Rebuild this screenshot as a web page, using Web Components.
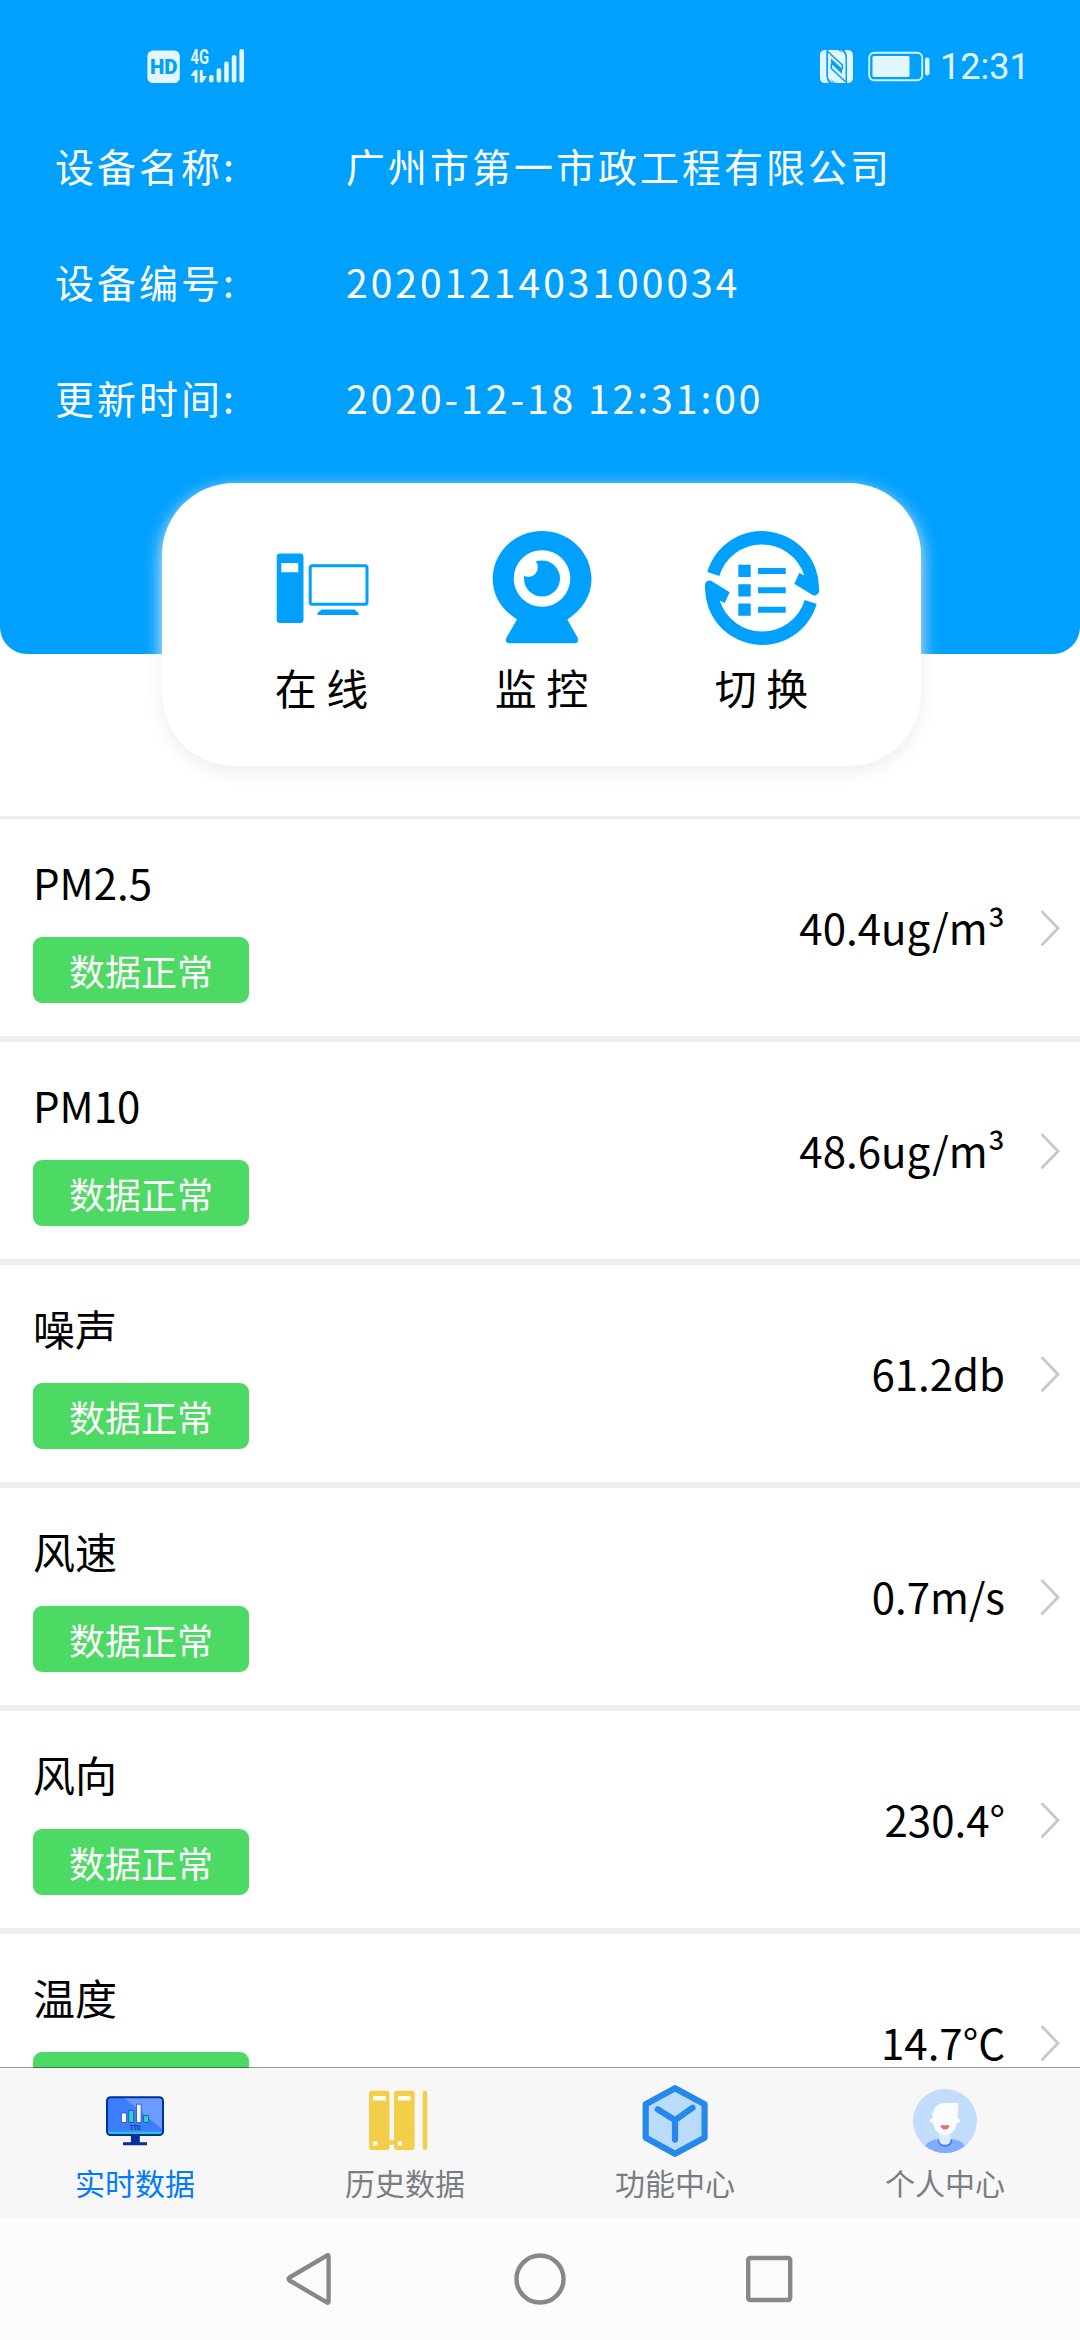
<!DOCTYPE html>
<html lang="zh-CN">
<head>
<meta charset="utf-8">
<title>实时数据</title>
<style>
  html, body { margin: 0; padding: 0; }
  body {
    width: 1080px; height: 2340px; overflow: hidden; background: #fff; color: #000;
    font-family: "Noto Sans CJK SC", "Noto Sans", sans-serif;
  }
</style>
</head>
<body>
<app-page></app-page>

<template id="t-page">
  <style>
    :host { display: flex; flex-direction: column; height: 2340px; }
    main { flex: 1; min-height: 0; overflow: hidden; display: flex; flex-direction: column; }
    header { flex: none; height: 654px; background: #00a0ff; border-radius: 0 0 27px 27px; }
    .rows { flex: none; margin-top: 50px; border-top: 3px solid #eee; }
  </style>
  <main>
    <header>
      <status-bar></status-bar>
      <info-row label="设备名称:">广州市第一市政工程有限公司</info-row>
      <info-row label="设备编号:">2020121403100034</info-row>
      <info-row label="更新时间:">2020-12-18 12:31:00</info-row>
    </header>
    <action-card>
      <action-item label="在 线">
        <svg width="114" height="114" viewBox="0 0 114 114" fill="#00a0ff">
          <path fill-rule="evenodd" d="M15 22.500H35.500Q38.500 22.500 38.500 26V88.500Q38.500 92 35.500 92H15Q11.700 92 11.700 88.500V26Q11.700 22.500 15 22.500ZM16.300 32V41.200H33.200V32Z"/>
          <rect x="45.200" y="34.700" width="56.800" height="38.600" rx="2" fill="none" stroke="#00a0ff" stroke-width="3"/>
          <path d="M56.500 78.500H89.500L93.500 82V84H52.500V82Z"/>
        </svg>
      </action-item>
      <action-item label="监 控">
        <svg width="114" height="114" viewBox="0 0 114 114" fill="#00a0ff">
          <path d="M57 0C84 0 106.500 21 106.500 48C106.500 65 97 79 82.300 88.500L92.500 106.500Q94.500 112.300 89.500 112.300H24.500Q19.500 112.300 21.500 106.500L32 88.500C17 79 7.700 65 7.700 48C7.700 21 30 0 57 0Z"/>
          <circle cx="57" cy="47.500" r="28.300" fill="#fff"/>
          <circle cx="57" cy="47.500" r="18"/>
          <circle cx="43.200" cy="36.400" r="9.600" fill="#fff"/>
        </svg>
      </action-item>
      <action-item label="切 换">
        <svg width="114" height="114" viewBox="0 0 114 114" fill="#00a0ff">
          <path d="M2.300 41A57 57 0 0 1 114 57.500V61Q112.500 65 108 64.300L89.300 52.700L94.300 42L99.300 44.500A44.500 44.500 0 0 0 14.300 45Z"/>
          <path transform="rotate(180 57 57)" d="M2.300 41A57 57 0 0 1 114 57.500V61Q112.500 65 108 64.300L89.300 52.700L94.300 42L99.300 44.500A44.500 44.500 0 0 0 14.300 45Z"/>
          <path d="M33.300 33.700h12.400v12.300h-12.400zM33.300 53.200h12.400v12.300h-12.400zM33.300 72.500h12.400v12.300h-12.400zM53 37h27.700v6h-27.700zM53 56.300h27.700v6h-27.700zM53 75.700h27.700v6h-27.700z"/>
        </svg>
      </action-item>
    </action-card>
    <section class="rows">
      <reading-row name="PM2.5" value="40.4ug/m³">数据正常</reading-row>
      <reading-row name="PM10" value="48.6ug/m³">数据正常</reading-row>
      <reading-row name="噪声" value="61.2db">数据正常</reading-row>
      <reading-row name="风速" value="0.7m/s">数据正常</reading-row>
      <reading-row name="风向" value="230.4°">数据正常</reading-row>
      <reading-row name="温度" value="14.7°C"></reading-row>
    </section>
  </main>
  <tab-bar>
    <tab-item label="实时数据" active>
      <svg width="72" height="72" viewBox="0 0 72 72">
        <rect x="8" y="12.300" width="56" height="37.700" rx="3.500" fill="#3d7eff"/>
        <path d="M25.600 13H61Q63.500 13 63.500 16V44.500Z" fill="#6c9bff"/>
        <rect x="9" y="46.600" width="54" height="2.400" fill="#2fc6d0"/>
        <rect x="8" y="12.300" width="56" height="37.700" rx="3.500" fill="none" stroke="#00309a" stroke-width="2"/>
        <path d="M31.900 51H40.800V57.300H48V60.300H24V57.300H31.900Z" fill="#00309a"/>
        <g stroke="#1c4fb5" stroke-width=".8">
          <path d="M22.400 28h5v9.500h-5zM37.500 19.200h4.600v18.300h-4.600z" fill="#fff"/>
          <path d="M29.700 25.400h5v12.100h-5zM44.600 30.500h5v7h-5z" fill="#2fd0c8"/>
        </g>
        <text x="36.200" y="44.800" text-anchor="middle" font-family="Roboto, sans-serif" font-weight="700" font-size="6.500" textLength="10.800" lengthAdjust="spacingAndGlyphs" fill="#00309a">TTU</text>
      </svg>
    </tab-item>
    <tab-item label="历史数据">
      <svg width="72" height="72" viewBox="0 0 72 72" fill="#f2ce4b">
        <rect x="0" y="5.800" width="20.500" height="59.200" rx="3"/>
        <rect x="25" y="5.800" width="20.600" height="59.200" rx="3"/>
        <rect x="53.700" y="5.800" width="4.500" height="59.200" rx="2.200"/>
        <rect x="19" y="55.300" width="8" height="4.400"/>
        <path d="M4 11h12.700v4.500h-12.700zM28.800 11h12.700v4.500h-12.700zM4 56.200h4.300v4.500h-4.300zM28.800 56.200h4.300v4.500h-4.300z" fill="#fffaf0"/>
      </svg>
    </tab-item>
    <tab-item label="功能中心">
      <svg width="72" height="72" viewBox="0 0 72 72" stroke="#2589ea" stroke-width="6.200" stroke-linecap="round" stroke-linejoin="round">
        <path d="M36 3.200L65.600 19.200V52.800L36 68.800L6.700 52.800V19.200Z" fill="#badbfa"/>
        <path d="M18.800 24.300L36 35.200L53.500 22.800M36 35.200V54.600" fill="none"/>
      </svg>
    </tab-item>
    <tab-item label="个人中心">
      <svg width="72" height="72" viewBox="0 0 72 72">
        <circle cx="36" cy="36" r="32" fill="#c2ddfb"/>
        <path d="M15.800 60.800Q21.500 54.300 29 54.300H43Q51 54.300 56.200 60.800A32 32 0 0 1 15.800 60.800Z" fill="#82adff"/>
        <path d="M29.300 54.500Q30 61 36 61Q42 61 42.700 54.500" fill="none" stroke="#3f7df5" stroke-width="1.500"/>
        <path d="M30.400 46H41.400V55Q41.400 59.600 36 59.600Q30.400 59.600 30.400 55Z" fill="#dfebfe"/>
        <path d="M36 18H49.300L48.500 33.200Q51 33.500 51 35.600Q51 37.800 47.800 38C47 45.500 42 50 36 50C30 50 25 45.500 24.200 38Q20.800 37.800 20.800 35.600Q20.800 33.600 23.300 33.200C23 23.500 28 18 36 18Z" fill="#f9fbff"/>
        <path d="M31.500 40.300H40.500Q39.800 44.500 36 44.500Q32.200 44.500 31.500 40.300Z" fill="#dc7370"/>
      </svg>
    </tab-item>
  </tab-bar>
  <nav-keys></nav-keys>
</template>

<template id="t-status">
  <style>
    :host { display: flex; height: 107px; box-sizing: border-box; padding: 44px 0 0 147px; align-items: flex-start; color: #e3f6ff; }
    svg { display: block; flex: none; }
    .sig { margin-left: 9px; }
    .nfc { margin-left: 574px; }
    .bat { margin-left: 15px; }
    time { margin-left: 10px; font: 400 36px/48px Roboto, sans-serif; height: 46px; margin-top: -1px; }
  </style>
  <svg width="34" height="46" viewBox="0 0 34 46">
    <rect x=".4" y="6.600" width="32.400" height="32.400" rx="5.500" fill="#e3f6ff"/>
    <text x="16.700" y="29.500" text-anchor="middle" font-family="Roboto, sans-serif" font-weight="900" font-size="21" textLength="27.500" lengthAdjust="spacingAndGlyphs" fill="#00a0ff">HD</text>
  </svg>
  <svg class="sig" width="56" height="46" viewBox="0 0 56 46" fill="#e3f6ff">
    <text x=".5" y="20" font-family="Roboto, sans-serif" font-weight="700" font-size="20" textLength="18.500" lengthAdjust="spacingAndGlyphs">4G</text>
    <path d="M4.600 26H7.500V38.500H4.600V32H.4ZM9.800 26H12.700V32H17L12.700 38.500H9.800Z"/>
    <rect x="19" y="31" width="4.600" height="7.500" rx="2.200"/>
    <rect x="26.600" y="24.300" width="4.600" height="14.200" rx="2.200"/>
    <rect x="34.200" y="17.600" width="4.600" height="20.900" rx="2.200"/>
    <rect x="41.800" y="11" width="4.600" height="27.500" rx="2.200"/>
    <rect x="49.400" y="5" width="4.600" height="33.500" rx="2.200"/>
  </svg>
  <svg class="nfc" width="33" height="46" viewBox="0 0 33 46" fill="#e3f6ff">
    <path d="M5.500 6H6.300V31Q6.300 36 9 39H5.500Q0 39 0 33.500V11.500Q0 6 5.500 6Z"/>
    <path d="M8.500 6H17.500Q23.500 7.500 23.500 15V26L11 14.500V34Q11 37.500 13.500 39Q8 37.500 8 31V6Z"/>
    <path d="M25 39H16Q10.500 37.500 10.500 31V19L22 30V11Q22 7.500 20 6Q25.500 8 25.500 14V39Z"/>
    <path d="M27.500 39H27V14Q27 9 24.500 6H27.500Q33 6 33 11.500V33.500Q33 39 27.500 39Z"/>
    <path d="M7.300 7L22.300 21V25.500M25.800 38L11.300 24.500V20" fill="none" stroke="#00a0ff" stroke-width="1.600"/>
  </svg>
  <svg class="bat" width="62" height="46" viewBox="0 0 62 46">
    <rect x="1.200" y="8.800" width="53" height="27.500" rx="5" fill="none" stroke="#d2f1ff" stroke-width="1.900"/>
    <rect x="4.500" y="12" width="37" height="21" rx="1.500" fill="#e3f6ff"/>
    <rect x="57" y="13.500" width="4.500" height="18" rx="2.200" fill="#e3f6ff"/>
  </svg>
  <time>12:31</time>
</template>

<template id="t-info">
  <style>
    :host { display: flex; height: 116px; line-height: 116px; padding-left: 55px; font-size: 39px; letter-spacing: 3px; color: #fff; white-space: nowrap; }
    .label { flex: none; width: 291px; }
  </style>
  <span class="label"></span><slot></slot>
</template>

<template id="t-card">
  <style>
    :host {
      flex: none; display: flex; justify-content: center; box-sizing: border-box;
      width: 759px; height: 283px; margin: -171px 0 0 162px; padding-top: 48px;
      background: #fff; border-radius: 72px; box-shadow: 0 6px 18px #eee;
    }
  </style>
  <slot></slot>
</template>

<template id="t-action">
  <style>
    :host { display: flex; flex-direction: column; align-items: center; gap: 12px; width: 220px; }
    ::slotted(svg) { display: block; }
    .label { font-size: 42px; line-height: 60px; white-space: pre; }
  </style>
  <slot></slot><span class="label"></span>
</template>

<template id="t-reading">
  <style>
    :host { display: flex; align-items: center; box-sizing: border-box; height: 223px; padding: 0 20px 0 33px; border-bottom: 6px solid #eee; background: #fff; }
    .left { flex: 1; display: flex; flex-direction: column; align-items: flex-start; gap: 25px; }
    .name, .value { font-size: 42px; line-height: 60px; }
    .value { margin-bottom: 2px; }
    .tag { width: 216px; height: 66px; line-height: 66px; border-radius: 9px; background: #4cd964; color: #fff; font-size: 36px; text-align: center; }
    svg { display: block; margin-left: 35px; }
  </style>
  <div class="left"><span class="name"></span><span class="tag"><slot></slot></span></div>
  <span class="value"></span>
  <svg width="20" height="36" viewBox="0 0 20 36"><path d="M2.300 1.900L18 18.200L2.300 34.500" fill="none" stroke="#c8c8c8" stroke-width="2.800" stroke-linecap="round"/></svg>
</template>

<template id="t-tabs">
  <style>
    :host { flex: none; position: relative; display: flex; height: 150px; margin-top: -1px; border-top: 1px solid rgba(0,0,0,.4); background: #f7f7f7; background-clip: padding-box; }
  </style>
  <slot></slot>
</template>

<template id="t-tab">
  <style>
    :host { flex: 1; display: flex; flex-direction: column; align-items: center; padding-top: 17px; color: #7a7e83; }
    :host([active]) { color: #007aff; }
    ::slotted(svg) { display: block; }
    .label { margin-top: 4px; font-size: 30px; line-height: 42px; }
  </style>
  <slot></slot><span class="label"></span>
</template>

<template id="t-nav">
  <style>
    :host { flex: none; display: flex; justify-content: center; gap: 178px; height: 122px; box-sizing: border-box; padding-top: 35px; background: #fcfcfc; }
    svg { display: block; fill: none; stroke: #888; stroke-width: 4.400; stroke-linejoin: round; }
  </style>
  <svg width="52" height="52" viewBox="0 0 52 52"><path d="M43.200 2.300Q44.600 1.500 44.600 4V48Q44.600 50.500 42.800 49.300L5.500 27.500Q4 26 5.500 24.500Z"/></svg>
  <svg width="52" height="52" viewBox="0 0 52 52"><circle cx="26" cy="26" r="23.500"/></svg>
  <svg width="52" height="52" viewBox="0 0 52 52"><rect x="4.200" y="5" width="42" height="42" rx="2"/></svg>
</template>

<script>
  // Registers a custom element whose shadow root is cloned from a template;
  // each listed attribute is written into the shadow node with the same class.
  function define(tag, templateId, attributes = []) {
    customElements.define(tag, class extends HTMLElement {
      constructor() {
        super();
        this.attachShadow({ mode: 'open' })
            .append(document.getElementById(templateId).content.cloneNode(true));
      }
      connectedCallback() {
        for (const name of attributes) {
          this.shadowRoot.querySelector('.' + name).textContent = this.getAttribute(name) || '';
        }
      }
    });
  }
  define('status-bar', 't-status');
  define('info-row', 't-info', ['label']);
  define('action-card', 't-card');
  define('action-item', 't-action', ['label']);
  define('reading-row', 't-reading', ['name', 'value']);
  define('tab-bar', 't-tabs');
  define('tab-item', 't-tab', ['label']);
  define('nav-keys', 't-nav');
  define('app-page', 't-page');
</script>
</body>
</html>
